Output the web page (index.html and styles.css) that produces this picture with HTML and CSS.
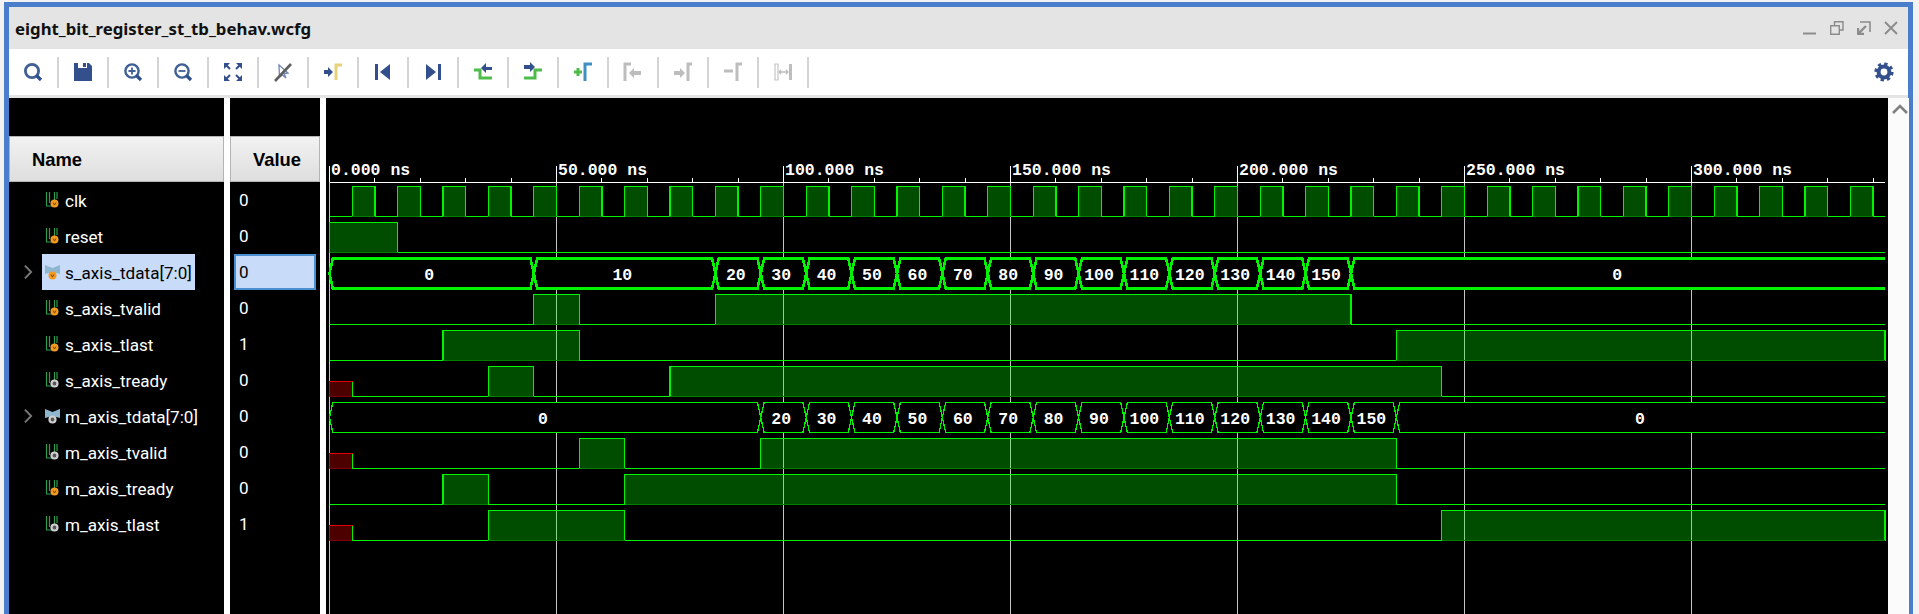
FILE: index.html
```html
<!DOCTYPE html>
<html lang="en">

<head>
    <meta charset="UTF-8">
    <title>eight_bit_register_st_tb_behav.wcfg</title>
    <link rel="stylesheet" href="styles.css">
</head>

<body>
    <!-- shared icons for the signal list -->
    <svg class="defs" width="0" height="0">
        <defs>
            <g id="wireBars">
                <path d="M1.5 1V15H7M4.5 1V12M9.5 1V9M12 1V8" fill="none" stroke="#2f9a50" stroke-width="1.2" />
            </g>
            <g id="busBow">
                <path d="M0 2L7.5 5L15 2V11L7.5 9L0 11Z" fill="#8fb6cf" />
            </g>
            <g id="dotIn">
                <circle cx="9.5" cy="12.5" r="4" fill="#f39a22" />
                <path d="M8.1 11.5L9.5 14.1L10.9 11.5" fill="none" stroke="#7a4300" stroke-width="1" />
            </g>
            <g id="dotOut">
                <circle cx="9.5" cy="12.5" r="3" fill="#555" stroke="#cfcfcf" stroke-width="2.2" />
            </g>
            <symbol id="sigIn" viewBox="0 0 16 18">
                <use href="#wireBars" />
                <use href="#dotIn" />
            </symbol>
            <symbol id="sigOut" viewBox="0 0 16 18">
                <use href="#wireBars" />
                <use href="#dotOut" />
            </symbol>
            <symbol id="busIn" viewBox="0 0 16 18">
                <use href="#busBow" />
                <use href="#dotIn" x="-2" />
            </symbol>
            <symbol id="busOut" viewBox="0 0 16 18">
                <use href="#busBow" />
                <use href="#dotOut" x="-2" />
            </symbol>
        </defs>
    </svg>

    <div class="window">
        <div class="titlebar">
            <span class="title">eight_bit_register_st_tb_behav.wcfg</span>
            <div class="winBtns">
                <svg width="14" height="14" viewBox="0 0 14 14"><path d="M0 12.5H13" stroke="#8c8c8c" stroke-width="2" /></svg>
                <svg width="14" height="14" viewBox="0 0 14 14"><path d="M4.5 4V.7H13V9H9.5M.7 4.7H9.3V13.3H.7Z" fill="none" stroke="#8c8c8c" stroke-width="1.4" /></svg>
                <svg width="14" height="14" viewBox="0 0 14 14"><path d="M3 1H13V11" fill="none" stroke="#8c8c8c" stroke-width="1.6" /><path d="M1 13L9 5M1 7V13H7" fill="none" stroke="#8c8c8c" stroke-width="2.4" /></svg>
                <svg width="14" height="14" viewBox="0 0 14 14"><path d="M1 1L13 13M13 1L1 13" stroke="#8c8c8c" stroke-width="2" /></svg>
            </div>
        </div>

        <div class="toolbar">
            <div class="tool"><svg viewBox="0 0 20 20"><circle cx="9" cy="9" r="6.6" fill="none" stroke="#3f5f95" stroke-width="2.8" /><path d="M13.5 13.5L18 18" stroke="#2f4f8a" stroke-width="3.2" /></svg></div>
            <div class="tool"><svg viewBox="0 0 20 20"><path d="M1 1H5V6H14V1H16L19 4V19H1Z" fill="#34508c" /><path d="M10 1H13V5H10Z" fill="#34508c" /></svg></div>
            <div class="tool"><svg viewBox="0 0 20 20"><circle cx="9" cy="9" r="6.6" fill="none" stroke="#3f5f95" stroke-width="2.4" /><path d="M5.5 9H12.5M9 5.5V12.5" stroke="#3f5f95" stroke-width="1.8" /><path d="M13.5 13.5L18 18" stroke="#2f4f8a" stroke-width="3.2" /></svg></div>
            <div class="tool"><svg viewBox="0 0 20 20"><circle cx="9" cy="9" r="6.6" fill="none" stroke="#3f5f95" stroke-width="2.4" /><path d="M5.5 9H12.5" stroke="#3f5f95" stroke-width="1.8" /><path d="M13.5 13.5L18 18" stroke="#2f4f8a" stroke-width="3.2" /></svg></div>
            <div class="tool"><svg viewBox="0 0 20 20"><path d="M1 1H7L1 7ZM19 1H13L19 7ZM1 19H7L1 13ZM19 19H13L19 13Z" fill="#34508c" /><path d="M2 2L7 7M18 2L13 7M2 18L7 13M18 18L13 13" stroke="#34508c" stroke-width="2" /></svg></div>
            <div class="tool"><svg viewBox="0 0 20 20"><path d="M6 3L15 11L11 11.5L13 16L9.5 13L6.5 15Z" fill="#fff" stroke="#6f88b0" stroke-width="1.3" /><path d="M2 19L18 2" stroke="#5f5f5f" stroke-width="2.6" /></svg></div>
            <div class="tool"><svg viewBox="0 0 20 20"><path d="M1 8H5V5L10 10L5 15V12H1Z" fill="#34508c" /><path d="M13 18V3H19" fill="none" stroke="#e6d27a" stroke-width="3" /></svg></div>
            <div class="tool"><svg viewBox="0 0 20 20"><path d="M2 2H5V18H2ZM17 2V18L7 10Z" fill="#34508c" /></svg></div>
            <div class="tool"><svg viewBox="0 0 20 20"><path d="M18 2H15V18H18ZM3 2V18L13 10Z" fill="#34508c" /></svg></div>
            <div class="tool"><svg viewBox="0 0 20 20"><path d="M1 8H7V16H19" fill="none" stroke="#4fbb4a" stroke-width="3" /><path d="M19 5H13V1L8 6L13 11V8H19Z" fill="#34508c" /></svg></div>
            <div class="tool"><svg viewBox="0 0 20 20"><path d="M1 16H12V8H19" fill="none" stroke="#4fbb4a" stroke-width="3" /><path d="M1 3H7V0L12 5L7 10V7H1Z" fill="#34508c" /></svg></div>
            <div class="tool"><svg viewBox="0 0 20 20"><path d="M1 10H9M5 6V14" stroke="#4fbb4a" stroke-width="3" /><path d="M12 19V2H19" fill="none" stroke="#3f8fc4" stroke-width="3" /></svg></div>
            <div class="tool"><svg viewBox="0 0 20 20"><path d="M2 19V2H8" fill="none" stroke="#bdbdbd" stroke-width="3" /><path d="M18 9H11V6L6 11L11 16V13H18Z" fill="#bdbdbd" /></svg></div>
            <div class="tool"><svg viewBox="0 0 20 20"><path d="M15 19V2H19" fill="none" stroke="#bdbdbd" stroke-width="3" /><path d="M1 9H7V6L12 11L7 16V13H1Z" fill="#bdbdbd" /></svg></div>
            <div class="tool"><svg viewBox="0 0 20 20"><path d="M1 9H10" stroke="#bdbdbd" stroke-width="3" /><path d="M14 19V2H19" fill="none" stroke="#bdbdbd" stroke-width="3" /></svg></div>
            <div class="tool"><svg viewBox="0 0 20 20"><path d="M2 2H5V18H2Z" fill="none" stroke="#c4c4c4" stroke-width="1.2" /><path d="M16 2H19V18H16Z" fill="#bdbdbd" /><path d="M6 10H15M8 8L6 10L8 12M13 8L15 10L13 12" fill="none" stroke="#bdbdbd" stroke-width="1.3" /></svg></div>
            <div class="gear"><svg viewBox="0 0 20 20"><circle cx="10" cy="10" r="5.4" fill="none" stroke="#34508c" stroke-width="4" /><circle cx="10" cy="10" r="8" fill="none" stroke="#34508c" stroke-width="3.2" stroke-dasharray="3.2 3.08" /></svg></div>
        </div>

        <div class="panes">
            <!-- Coluna de nomes -->
            <div class="namePane">
                <div class="paneTop"></div>
                <div class="colHead nameHead">Name</div>
                <div class="row"><span class="expander"></span><svg class="sigIcon"><use href="#sigIn" /></svg><span class="label">clk</span></div>
                <div class="row"><span class="expander"></span><svg class="sigIcon"><use href="#sigIn" /></svg><span class="label">reset</span></div>
                <div class="row"><span class="expander"><svg viewBox="0 0 10 16"><path d="M1 1L8 8L1 15" fill="none" stroke="#7c7c7c" stroke-width="2" /></svg></span><div class="picked"><svg class="sigIcon"><use href="#busIn" /></svg><span class="label">s_axis_tdata[7:0]</span></div></div>
                <div class="row"><span class="expander"></span><svg class="sigIcon"><use href="#sigIn" /></svg><span class="label">s_axis_tvalid</span></div>
                <div class="row"><span class="expander"></span><svg class="sigIcon"><use href="#sigIn" /></svg><span class="label">s_axis_tlast</span></div>
                <div class="row"><span class="expander"></span><svg class="sigIcon"><use href="#sigOut" /></svg><span class="label">s_axis_tready</span></div>
                <div class="row"><span class="expander"><svg viewBox="0 0 10 16"><path d="M1 1L8 8L1 15" fill="none" stroke="#7c7c7c" stroke-width="2" /></svg></span><svg class="sigIcon"><use href="#busOut" /></svg><span class="label">m_axis_tdata[7:0]</span></div>
                <div class="row"><span class="expander"></span><svg class="sigIcon"><use href="#sigOut" /></svg><span class="label">m_axis_tvalid</span></div>
                <div class="row"><span class="expander"></span><svg class="sigIcon"><use href="#sigIn" /></svg><span class="label">m_axis_tready</span></div>
                <div class="row"><span class="expander"></span><svg class="sigIcon"><use href="#sigOut" /></svg><span class="label">m_axis_tlast</span></div>
            </div>

            <!-- Coluna de valores -->
            <div class="valuePane">
                <div class="paneTop"></div>
                <div class="colHead valueHead">Value</div>
                <div class="value">0</div>
                <div class="value">0</div>
                <div class="value"><span class="pickedValue">0</span></div>
                <div class="value">0</div>
                <div class="value">1</div>
                <div class="value">0</div>
                <div class="value">0</div>
                <div class="value">0</div>
                <div class="value">0</div>
                <div class="value">1</div>
            </div>

            <!-- Formas de onda: x em ns, 4.54 px por ns -->
            <svg class="wavePane" width="1562" height="516" viewBox="326 98 1562 516">
                <g transform="translate(329.5 0) scale(4.54 1)">
                    <path class="grid" d="M0 166V614M50 166V614M100 166V614M150 166V614M200 166V614M250 166V614M300 166V614" />
                    <path class="ruler" d="M0 182.5H342.6M0 166V182M50 166V182M100 166V182M150 166V182M200 166V182M250 166V182M300 166V182" />
                    <path class="ruler" d="M10 178V182M20 178V182M30 178V182M40 178V182M60 178V182M70 178V182M80 178V182M90 178V182M110 178V182M120 178V182M130 178V182M140 178V182M160 178V182M170 178V182M180 178V182M190 178V182M210 178V182M220 178V182M230 178V182M240 178V182M260 178V182M270 178V182M280 178V182M290 178V182M310 178V182M320 178V182M330 178V182M340 178V182" />

                    <g transform="translate(0 186.5)">
                        <path class="wave" d="M0 30H5V0H10V30H15V0H20V30H25V0H30V30H35V0H40V30H45V0H50V30H55V0H60V30H65V0H70V30H75V0H80V30H85V0H90V30H95V0H100V30H105V0H110V30H115V0H120V30H125V0H130V30H135V0H140V30H145V0H150V30H155V0H160V30H165V0H170V30H175V0H180V30H185V0H190V30H195V0H200V30H205V0H210V30H215V0H220V30H225V0H230V30H235V0H240V30H245V0H250V30H255V0H260V30H265V0H270V30H275V0H280V30H285V0H290V30H295V0H300V30H305V0H310V30H315V0H320V30H325V0H330V30H335V0H340V30H342.6" />
                        <path class="waveBase" d="M5 30H10M15 30H20M25 30H30M35 30H40M45 30H50M55 30H60M65 30H70M75 30H80M85 30H90M95 30H100M105 30H110M115 30H120M125 30H130M135 30H140M145 30H150M155 30H160M165 30H170M175 30H180M185 30H190M195 30H200M205 30H210M215 30H220M225 30H230M235 30H240M245 30H250M255 30H260M265 30H270M275 30H280M285 30H290M295 30H300M305 30H310M315 30H320M325 30H330M335 30H340" />
                    </g>
                    <g transform="translate(0 222.5)">
                        <path class="wave" d="M0 30V0H15V30H342.6" />
                        <path class="waveBase" d="M0 30H15" />
                    </g>
                    <g class="busRow pickedBus" transform="translate(0 258.5)">
                        <path class="bus" d="M0 15l.73-15h43.54l.73 15l-.73 15h-43.54z" />
                        <path class="bus" d="M45 15l.73-15h38.54l.73 15l-.73 15h-38.54z" />
                        <path class="bus" d="M85 15l.73-15h8.54l.73 15l-.73 15h-8.54zm10 0l.73-15h8.54l.73 15l-.73 15h-8.54zm10 0l.73-15h8.54l.73 15l-.73 15h-8.54zm10 0l.73-15h8.54l.73 15l-.73 15h-8.54zm10 0l.73-15h8.54l.73 15l-.73 15h-8.54zm10 0l.73-15h8.54l.73 15l-.73 15h-8.54zm10 0l.73-15h8.54l.73 15l-.73 15h-8.54zm10 0l.73-15h8.54l.73 15l-.73 15h-8.54zm10 0l.73-15h8.54l.73 15l-.73 15h-8.54zm10 0l.73-15h8.54l.73 15l-.73 15h-8.54zm10 0l.73-15h8.54l.73 15l-.73 15h-8.54zm10 0l.73-15h8.54l.73 15l-.73 15h-8.54zm10 0l.73-15h8.54l.73 15l-.73 15h-8.54zm10 0l.73-15h8.54l.73 15l-.73 15h-8.54z" />
                        <path class="bus" d="M342.6 0H225.73L225 15L225.73 30H342.6" />
                    </g>
                    <g transform="translate(0 294.5)">
                        <path class="wave" d="M0 30H45V0H55V30H85V0H225V30H342.6" />
                        <path class="waveBase" d="M45 30H55M85 30H225" />
                    </g>
                    <g transform="translate(0 330.5)">
                        <path class="wave" d="M0 30H25V0H55V30H235V0H342.6V30" />
                        <path class="waveBase" d="M25 30H55M235 30H342.6" />
                    </g>
                    <g transform="translate(0 366.5)">
                        <path class="unknown" d="M0 30V15H5V30Z" />
                        <path class="unknownBase" d="M0 30H5" />
                        <path class="wave" d="M5 30H35V0H45V30H75V0H245V30H342.6" />
                        <path class="waveBase" d="M35 30H45M75 30H245" />
                        <path class="waveEdge" d="M5 15V30" />
                    </g>
                    <g class="busRow" transform="translate(0 402.5)">
                        <path class="bus" d="M0 15l.73-15h93.54l.73 15l-.73 15h-93.54z" />
                        <path class="bus" d="M95 15l.73-15h8.54l.73 15l-.73 15h-8.54zm10 0l.73-15h8.54l.73 15l-.73 15h-8.54zm10 0l.73-15h8.54l.73 15l-.73 15h-8.54zm10 0l.73-15h8.54l.73 15l-.73 15h-8.54zm10 0l.73-15h8.54l.73 15l-.73 15h-8.54zm10 0l.73-15h8.54l.73 15l-.73 15h-8.54zm10 0l.73-15h8.54l.73 15l-.73 15h-8.54zm10 0l.73-15h8.54l.73 15l-.73 15h-8.54zm10 0l.73-15h8.54l.73 15l-.73 15h-8.54zm10 0l.73-15h8.54l.73 15l-.73 15h-8.54zm10 0l.73-15h8.54l.73 15l-.73 15h-8.54zm10 0l.73-15h8.54l.73 15l-.73 15h-8.54zm10 0l.73-15h8.54l.73 15l-.73 15h-8.54zm10 0l.73-15h8.54l.73 15l-.73 15h-8.54z" />
                        <path class="bus" d="M342.6 0H235.73L235 15L235.73 30H342.6" />
                    </g>
                    <g transform="translate(0 438.5)">
                        <path class="unknown" d="M0 30V15H5V30Z" />
                        <path class="unknownBase" d="M0 30H5" />
                        <path class="wave" d="M5 30H55V0H65V30H95V0H235V30H342.6" />
                        <path class="waveBase" d="M55 30H65M95 30H235" />
                        <path class="waveEdge" d="M5 15V30" />
                    </g>
                    <g transform="translate(0 474.5)">
                        <path class="wave" d="M0 30H25V0H35V30H65V0H235V30H342.6" />
                        <path class="waveBase" d="M25 30H35M65 30H235" />
                    </g>
                    <g transform="translate(0 510.5)">
                        <path class="unknown" d="M0 30V15H5V30Z" />
                        <path class="unknownBase" d="M0 30H5" />
                        <path class="wave" d="M5 30H35V0H65V30H245V0H342.6V30" />
                        <path class="waveBase" d="M35 30H65M245 30H342.6" />
                        <path class="waveEdge" d="M5 15V30" />
                    </g>
                </g>

                <g class="timeLabels">
                    <text x="331" y="175">0.000 ns</text>
                    <text x="558" y="175">50.000 ns</text>
                    <text x="785" y="175">100.000 ns</text>
                    <text x="1012" y="175">150.000 ns</text>
                    <text x="1239" y="175">200.000 ns</text>
                    <text x="1466" y="175">250.000 ns</text>
                    <text x="1693" y="175">300.000 ns</text>
                </g>

                <g class="busValues" transform="translate(-2.3 0)">
                    <text x="431.6" y="280">0</text>
                    <text x="624.6" y="280">10</text>
                    <text x="738.1" y="280">20</text>
                    <text x="783.5" y="280">30</text>
                    <text x="828.9" y="280">40</text>
                    <text x="874.3" y="280">50</text>
                    <text x="919.7" y="280">60</text>
                    <text x="965.1" y="280">70</text>
                    <text x="1010.5" y="280">80</text>
                    <text x="1055.9" y="280">90</text>
                    <text x="1101.3" y="280">100</text>
                    <text x="1146.7" y="280">110</text>
                    <text x="1192.1" y="280">120</text>
                    <text x="1237.5" y="280">130</text>
                    <text x="1282.9" y="280">140</text>
                    <text x="1328.3" y="280">150</text>
                    <text x="1619.6" y="280">0</text>

                    <text x="545.2" y="424">0</text>
                    <text x="783.5" y="424">20</text>
                    <text x="828.9" y="424">30</text>
                    <text x="874.3" y="424">40</text>
                    <text x="919.7" y="424">50</text>
                    <text x="965.1" y="424">60</text>
                    <text x="1010.5" y="424">70</text>
                    <text x="1055.9" y="424">80</text>
                    <text x="1101.3" y="424">90</text>
                    <text x="1146.7" y="424">100</text>
                    <text x="1192.1" y="424">110</text>
                    <text x="1237.5" y="424">120</text>
                    <text x="1282.9" y="424">130</text>
                    <text x="1328.3" y="424">140</text>
                    <text x="1373.7" y="424">150</text>
                    <text x="1642.3" y="424">0</text>
                </g>
            </svg>

            <div class="scrollbar">
                <svg width="16" height="10" viewBox="0 0 16 10"><path d="M1 9L8 2L15 9" fill="none" stroke="#808080" stroke-width="2.6" /></svg>
            </div>
        </div>
    </div>
</body>

</html>
```

FILE: styles.css
```css
html,
body {
    margin: 0;
    height: 614px;
    overflow: hidden;
}

body {
    background-color: #f2f2f2;
    font-family: Roboto, Arial, sans-serif;
    padding: 2px 6px 0 4px;
    box-sizing: border-box;
}

.defs {
    display: block;
    height: 0;
}

.window {
    border: 5px solid #4a7ecb;
    border-bottom: none;
    height: 612px;
    box-sizing: border-box;
    display: flex;
    flex-direction: column;
}

/* Barra de titulo */
.titlebar {
    height: 42px;
    background-color: #e4e4e4;
    display: flex;
    align-items: center;
    padding-left: 6px;
    flex: none;
}

.title {
    font-family: "Noto Sans", Arial, sans-serif;
    font-weight: bold;
    font-size: 16.8px;
    color: #111;
    padding-top: 1px;
}

.winBtns {
    margin-left: auto;
    margin-right: 10px;
    display: flex;
    gap: 13px;
}

/* Barra de ferramentas */
.toolbar {
    height: 46px;
    background-color: #fff;
    border-bottom: 3px solid #e4e4e4;
    display: flex;
    align-items: center;
    flex: none;
}

.tool {
    width: 48px;
    height: 31px;
    border-right: 2px solid #d4d4d4;
    display: flex;
    align-items: center;
    justify-content: center;
}

.tool svg {
    width: 20px;
    height: 20px;
}

.gear {
    margin-left: auto;
    width: 48px;
    display: flex;
    justify-content: center;
}

.gear svg {
    width: 20px;
    height: 20px;
}

/* Paineis */
.panes {
    flex: 1;
    display: flex;
    background-color: #fff;
    min-height: 0;
}

.namePane {
    width: 215px;
    background-color: #000;
    flex: none;
}

.valuePane {
    width: 90px;
    margin-left: 6px;
    background-color: #000;
    flex: none;
}

.wavePane {
    margin-left: 6px;
    background-color: #000;
    flex: none;
    display: block;
}

.paneTop {
    height: 38px;
}

.colHead {
    height: 46px;
    box-sizing: border-box;
    border: 1px solid #b4b4b4;
    background: linear-gradient(#f2f2f2, #dedede);
    font-family: "Liberation Sans", Arial, sans-serif;
    font-weight: bold;
    font-size: 18.4px;
    color: #000;
    display: flex;
    align-items: center;
    padding-top: 2px;
}

.nameHead {
    padding-left: 22px;
}

.valueHead {
    padding-left: 22px;
}

.row {
    height: 36px;
    display: flex;
    align-items: center;
    color: #fff;
    font-size: 17.1px;
}

.label {
    padding-top: 1px;
}

.expander {
    width: 33px;
    padding-left: 15px;
    box-sizing: border-box;
    display: flex;
    flex: none;
}

.expander svg {
    width: 9px;
    height: 16px;
}

.picked {
    height: 36px;
    width: 153px;
    background-color: #c8dcfa;
    color: #000;
    display: flex;
    align-items: center;
}

.sigIcon {
    width: 16px;
    height: 18px;
    margin: 0 4px 0 3px;
    flex: none;
}

.value {
    height: 36px;
    padding-left: 4px;
    display: flex;
    align-items: center;
    color: #fff;
    font-size: 17.1px;
    text-indent: 5px;
}

.pickedValue {
    width: 82px;
    height: 36px;
    box-sizing: border-box;
    border: 2px solid #4a90d0;
    background-color: #c8dcfa;
    color: #000;
    display: flex;
    align-items: center;
    text-indent: 3px;
}

.scrollbar {
    width: 21px;
    background-color: #fbfbfb;
    display: flex;
    justify-content: center;
    padding-top: 6px;
    box-sizing: border-box;
    flex: none;
}

.scrollbar svg {
    margin-left: 2px;
}

/* Ondas */
.wavePane path {
    vector-effect: non-scaling-stroke;
    shape-rendering: crispEdges;
}

.grid {
    fill: none;
    stroke: #c4c4c4;
    stroke-width: 1;
}

.ruler {
    fill: none;
    stroke: #fff;
    stroke-width: 1;
}

.wave {
    fill: #00ff00;
    fill-opacity: 0.3;
    stroke: #00f400;
    stroke-width: 1.3;
}

.waveBase {
    fill: none;
    stroke: #007f00;
    stroke-width: 1;
}

.waveEdge {
    fill: none;
    stroke: #00f400;
    stroke-width: 1.3;
}

.unknown {
    fill: #4d0000;
    stroke: #e00000;
    stroke-width: 1;
}

.unknownBase {
    fill: none;
    stroke: #800000;
    stroke-width: 1;
}

.bus {
    fill: #000;
    stroke: #00f400;
    stroke-width: 1.3;
}

.pickedBus .bus {
    stroke-width: 2.6;
}

.timeLabels text,
.busValues text {
    font-family: "Liberation Mono", "Courier New", monospace;
    font-weight: bold;
    font-size: 16.5px;
    fill: #fff;
}

.busValues text {
    text-anchor: middle;
}
```
